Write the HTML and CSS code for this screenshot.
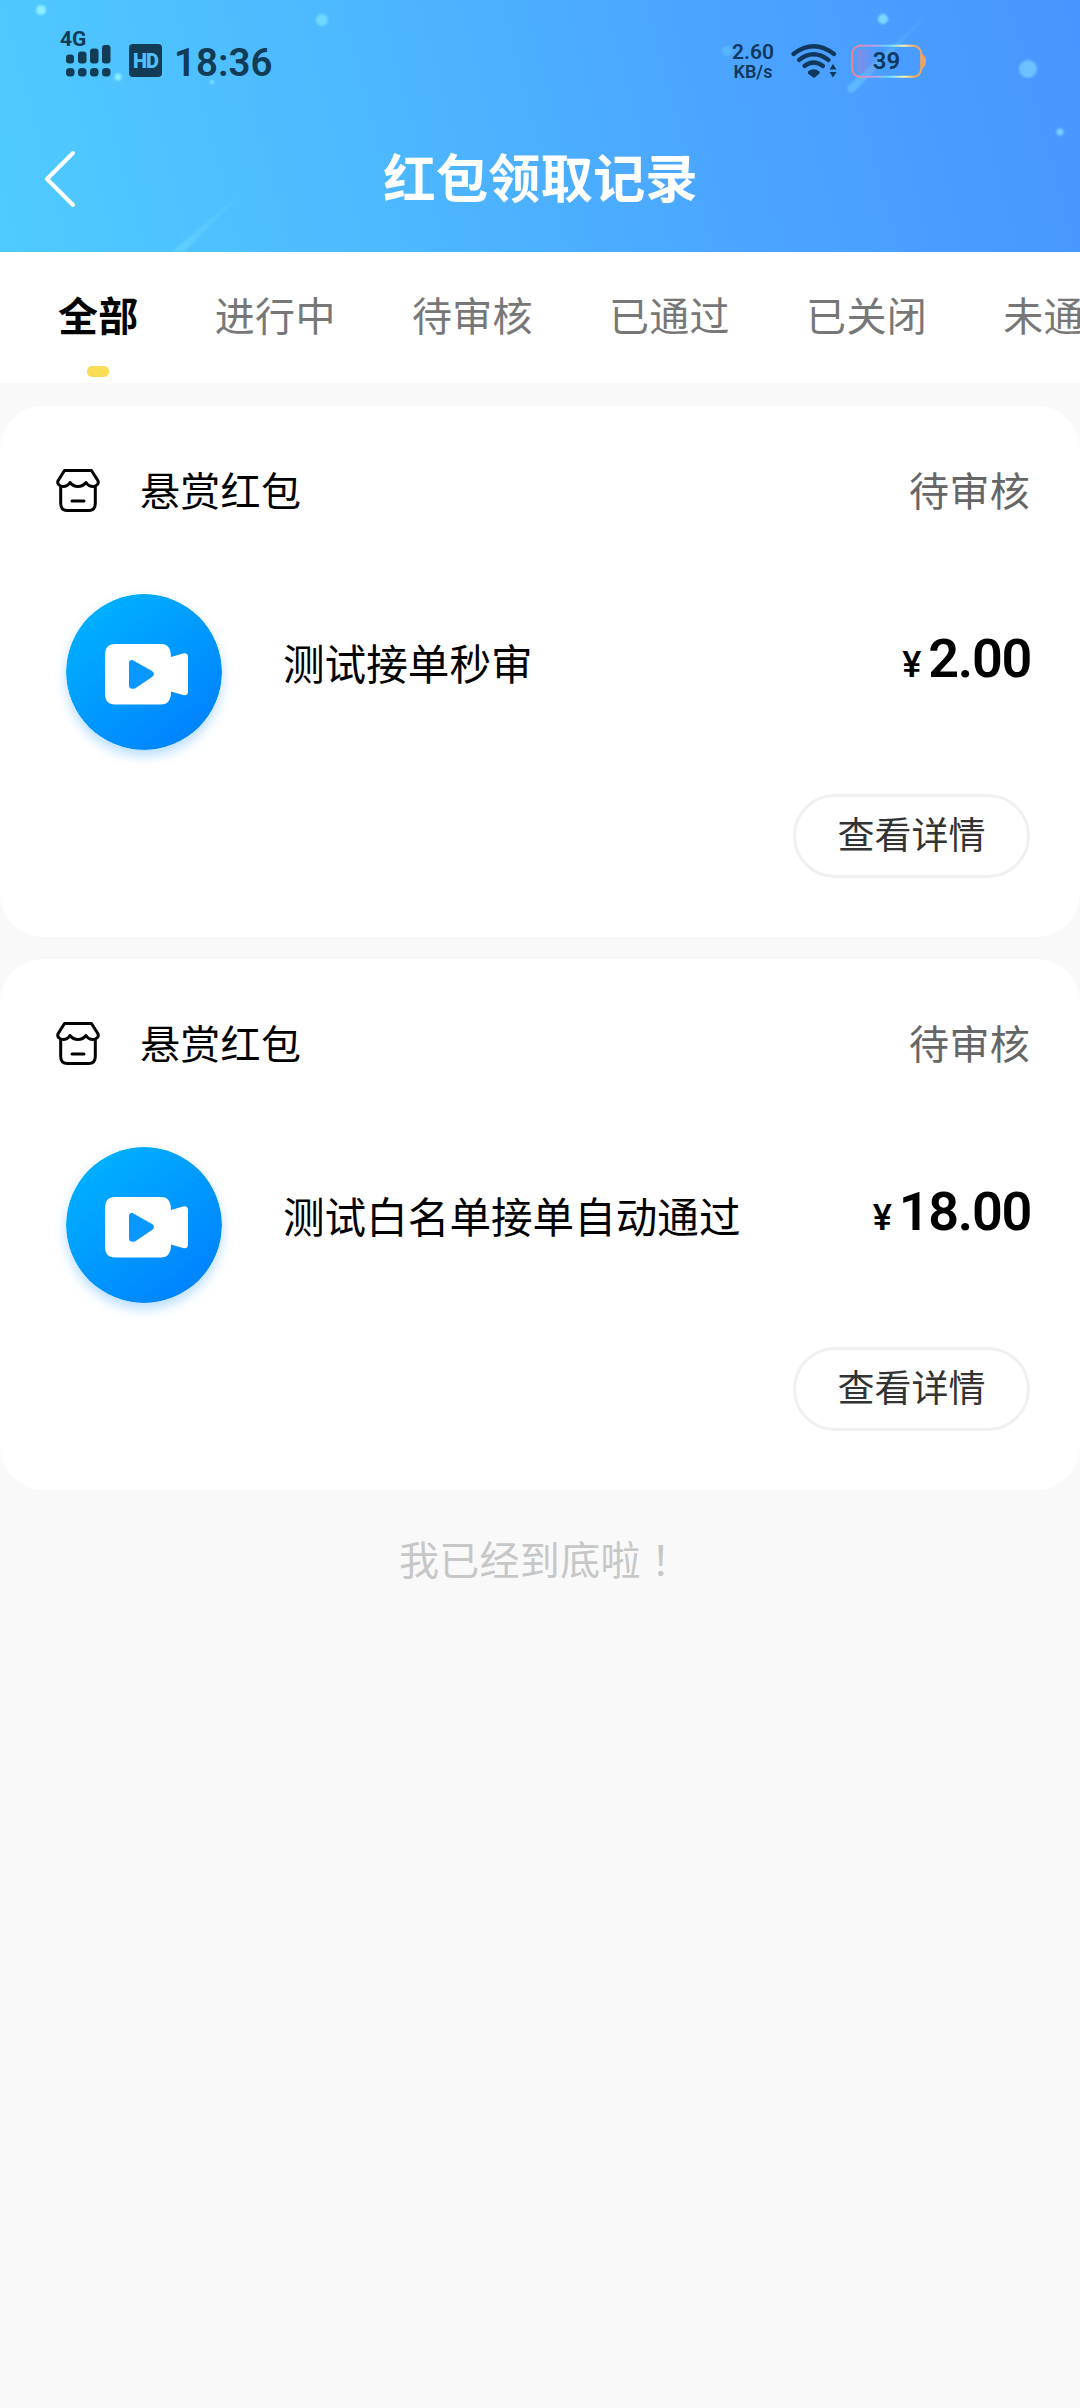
FILE: index.html
```html
<!DOCTYPE html>
<html lang="zh-CN">
<head>
<meta charset="utf-8">
<title>红包领取记录</title>
<link rel="stylesheet" href="styles.css">
</head>
<body>
<svg class="defs" width="0" height="0" aria-hidden="true">
  <defs>
    <linearGradient id="disc" x1="0.15" y1="0.1" x2="0.8" y2="0.9">
      <stop offset="0" stop-color="#00b0ff"/><stop offset="1" stop-color="#0084ff"/>
    </linearGradient>
    <symbol id="store" viewBox="0 0 44 43">
      <g fill="none" stroke="#000" stroke-width="3" stroke-linejoin="round" stroke-linecap="round">
        <path d="M8.500 1.500H35.500L41.800 11.500C43.500 15 40 17.500 37 17.500C33.500 17.500 31.500 16 30 13.500C28 16 25.500 17.500 22 17.500C18.500 17.500 16 16 14 13.500C12.500 16 10.500 17.500 7 17.500C4 17.500 .5 15 2.200 11.500Z"/>
        <path d="M4.700 18V34.500Q4.700 41.500 11.500 41.500H32.500Q39.300 41.500 39.300 34.500V18"/>
        <path d="M16 32H28"/>
      </g>
    </symbol>
    <symbol id="camera" viewBox="0 0 156 156">
      <circle cx="78" cy="78" r="78" fill="url(#disc)"/>
      <path fill="#fff" d="M49 50H95Q105 50 105 63L117 59.500Q122 58.500 122 63V97.500Q122 102 117 101L105 97.500Q105 110.500 95 110.500H49Q39 110.500 39 99.500V61Q39 50 49 50Z"/>
      <path fill="#0797ff" d="M63 69Q63 65.500 66.500 66L86 77Q90 80 86 83L69 94.500Q63 96 63 91Z"/>
    </symbol>
  </defs>
</svg>

<header class="header">
  <svg class="sky" viewBox="0 0 1080 252" aria-hidden="true">
    <defs>
      <filter id="soft"><feGaussianBlur stdDeviation="1.2"/></filter>
      <linearGradient id="s1" x1="0" y1="1" x2="1" y2="0"><stop offset="0" stop-color="#7be0ff" stop-opacity=".42"/><stop offset="1" stop-color="#7be0ff" stop-opacity="0"/></linearGradient>
    </defs>
    <g filter="url(#soft)">
      <path d="M172 252L251 184L184 252Z" fill="url(#s1)"/>
      <path d="M848 86L940 3L854 92Q846 94 848 86Z" fill="url(#s1)"/>
      <circle cx="41" cy="10" r="5" fill="#8ceeff"/>
      <circle cx="322" cy="20" r="6" fill="#70d7ff"/>
      <circle cx="118" cy="77" r="3.500" fill="#88f0ff"/>
      <circle cx="212" cy="82" r="2" fill="#7ceaff"/>
      <circle cx="727" cy="51" r="5" fill="#5ab5ff"/>
      <circle cx="883" cy="19" r="5" fill="#7ad8ff"/>
      <circle cx="1028" cy="69" r="9" fill="#6cc2ff"/>
      <circle cx="1060" cy="132" r="3.500" fill="#77d0ff"/>
    </g>
  </svg>

  <div class="status">
    <div class="signal">
      <span class="net">4G</span>
      <svg width="45" height="32" viewBox="0 0 45 32" fill="#123b55">
        <rect x="0" y="9.500" width="8" height="9" rx="3"/><rect x="12" y="6.500" width="8.500" height="12" rx="3"/><rect x="24" y="3.500" width="8.500" height="15" rx="3"/><rect x="36" y="0" width="8.500" height="18.500" rx="3"/>
        <rect x="0" y="23" width="8.500" height="8.500" rx="3.500"/><rect x="12" y="23" width="8.500" height="8.500" rx="3.500"/><rect x="24" y="23" width="8.500" height="8.500" rx="3.500"/><rect x="36" y="23" width="8.500" height="8.500" rx="3.500"/>
      </svg>
    </div>
    <span class="hd">HD</span>
    <span class="clock">18:36</span>
    <div class="speed"><span class="rate">2.60</span><span class="unit">KB/s</span></div>
    <svg class="wifi" width="46" height="34" viewBox="0 0 46 34">
      <g fill="none" stroke="#10385c" stroke-width="4.200" stroke-linecap="round">
        <path d="M2.500 10Q22.500-5.500 43 10"/><path d="M8 16Q22.500 4.500 37.500 16"/><path d="M13.500 22Q22.500 15 32 22"/>
      </g>
      <path fill="#10385c" d="M17 27.500Q22.500 23 28.500 27.500Q29 29 28 30L23 34L17.500 30Q16.500 29 17 27.500ZM42 20L45.500 25.500H38.500ZM42 33.500L45.500 28H38.500Z"/>
    </svg>
    <div class="battery">
      <svg width="75" height="34" viewBox="0 0 75 34">
        <defs>
          <linearGradient id="rim"><stop offset="0" stop-color="#ed8390"/><stop offset=".3" stop-color="#c09be8"/><stop offset=".53" stop-color="#65dcff"/><stop offset=".75" stop-color="#fff6ac"/><stop offset=".92" stop-color="#f4a457"/></linearGradient>
          <linearGradient id="charge"><stop offset="0" stop-color="#a484d2" stop-opacity=".7"/><stop offset="1" stop-color="#748ff0" stop-opacity="0"/></linearGradient>
        </defs>
        <rect x="6" y="5" width="22" height="24" rx="4" fill="url(#charge)"/>
        <rect x="1.200" y="1.800" width="69" height="31" rx="8" fill="none" stroke="url(#rim)" stroke-width="2"/>
        <path d="M71 10Q75 12 75 17Q75 22 71 25Z" fill="#efa063"/>
      </svg>
      <span class="level">39</span>
    </div>
  </div>

  <div class="titlebar">
    <svg class="back" width="34" height="60" viewBox="0 0 34 60"><path d="M30 4L4 30L30 56" fill="none" stroke="#fff" stroke-width="4" stroke-linecap="round" stroke-linejoin="round"/></svg>
    <h1>红包领取记录</h1>
  </div>
</header>

<nav class="tabs">
  <a class="tab active">全部</a><a class="tab">进行中</a><a class="tab">待审核</a><a class="tab">已通过</a><a class="tab">已关闭</a><a class="tab">未通过</a>
</nav>

<main class="list">
  <article class="card">
    <div class="card-head"><svg class="store"><use href="#store"/></svg><span class="kind">悬赏红包</span><span class="state">待审核</span></div>
    <div class="card-body"><svg class="camera"><use href="#camera"/></svg><span class="name">测试接单秒审</span><span class="price"><small>¥</small>2.00</span></div>
    <div class="card-foot"><button class="detail">查看详情</button></div>
  </article>
  <article class="card">
    <div class="card-head"><svg class="store"><use href="#store"/></svg><span class="kind">悬赏红包</span><span class="state">待审核</span></div>
    <div class="card-body"><svg class="camera"><use href="#camera"/></svg><span class="name">测试白名单接单自动通过</span><span class="price"><small>¥</small>18.00</span></div>
    <div class="card-foot"><button class="detail">查看详情</button></div>
  </article>
  <p class="end">我已经到底啦<span class="mark" lang="zh-TW">！</span></p>
</main>
</body>
</html>
```
FILE: styles.css
```css
* { box-sizing: border-box; }
body {
  margin: 0;
  min-height: 2408px;
  background: #f9f9f9;
  color: #000;
  font-family: Roboto, "Noto Sans CJK SC", sans-serif;
  overflow-x: hidden;
}
.defs { position: absolute; }

.header {
  position: relative;
  height: 252px;
  background: linear-gradient(75deg, #4fcbff 0%, #4dbaff 32%, #4ba5ff 65%, #4895ff 100%);
}
.sky { position: absolute; inset: 0; width: 1080px; height: 252px; }

.status {
  position: relative;
  display: flex;
  align-items: flex-start;
  height: 108px;
  padding: 27px 0 0 60px;
  color: #123b55;
  font-weight: 500;
}
.signal { display: flex; flex-direction: column; width: 51px; }
.net { height: 18px; font-size: 21px; line-height: 24px; font-weight: 700; }
.signal svg { margin-left: 6px; }
.hd {
  width: 33px;
  height: 33px;
  margin: 17px 0 0 18px;
  border-radius: 4px;
  background: #123b55;
  color: #50beff;
  font-size: 20px;
  line-height: 34px;
  letter-spacing: -1px;
  font-weight: 900;
  text-align: center;
}
.clock { width: 110px; margin: 13px 0 0 12px; font-size: 38.5px; line-height: 46px; font-weight: 600; }
.speed {
  display: flex;
  flex-direction: column;
  align-items: center;
  width: 46px;
  margin: 12px 0 0 446px;
  color: #10385c;
  font-weight: 600;
}
.rate { font-size: 21px; line-height: 26px; }
.unit { font-size: 18px; line-height: 13px; }
.wifi { margin: 17px 0 0 15px; }
.battery { position: relative; width: 75px; height: 34px; margin: 17px 0 0 14px; }
.level { position: absolute; left: 0; width: 71px; top: 0; line-height: 34px; font-size: 24px; font-weight: 600; text-align: center; color: #10385c; }

.titlebar { position: relative; display: flex; align-items: center; height: 144px; padding: 0 43px; }
.back { margin-top: -3px; }
h1 {
  flex: 1;
  margin: 0 33px 0 0;
  color: #fff;
  font-size: 52.4px;
  line-height: 72px;
  font-weight: 700;
  text-align: center;
}

.tabs { display: flex; gap: 76.2px; height: 131px; padding: 0 58px; background: #fff; overflow: hidden; }
.tab {
  position: relative;
  flex: none;
  font-size: 40px;
  line-height: 132px;
  letter-spacing: .3px;
  color: #777;
}
.active { color: #000; font-weight: 700; }
.active::after {
  content: "";
  position: absolute;
  left: 50%;
  top: 114px;
  width: 22px;
  height: 11px;
  margin-left: -11px;
  border-radius: 5px;
  background: #fbdc56;
}

.list { display: flex; flex-direction: column; gap: 22px; padding-top: 23px; }
.card { height: 531px; padding: 50px 50px 59px 56px; border-radius: 44px; background: #fff; }
.card-head { display: flex; align-items: center; height: 68px; font-size: 40px; letter-spacing: .3px; }
.store { width: 44px; height: 43px; }
.kind { margin: -3px 0 0 40px; }
.state { margin: -3px 0 0 auto; color: #666; }
.card-body { display: flex; height: 156px; margin-top: 70px; padding-left: 10px; align-items: center; }
.camera { width: 156px; height: 156px; border-radius: 50%; box-shadow: 0 6px 12px rgba(0, 136, 255, .28); }
.name { margin: -20px 0 0 61px; font-size: 41.6px; }
.price { margin: -20px -1px 0 auto; font-size: 54px; line-height: 64px; font-weight: 600; letter-spacing: -1.300px; }
.price small { margin-right: 7px; font-size: 36px; font-weight: 500; letter-spacing: 0; }
.card-foot { display: flex; justify-content: flex-end; margin-top: 44px; }
.detail {
  width: 237px;
  height: 84px;
  padding: 0 0 6px;
  border: 3px solid #f0f0f0;
  border-radius: 42px;
  background: #fff;
  color: #333;
  font-family: inherit;
  font-size: 37px;
}
.end { margin: 16px 0 0; font-size: 40px; line-height: 60px; letter-spacing: .3px; color: #c7c7c7; text-align: center; }
.mark { font-family: "Noto Sans CJK TC", sans-serif; }
```
